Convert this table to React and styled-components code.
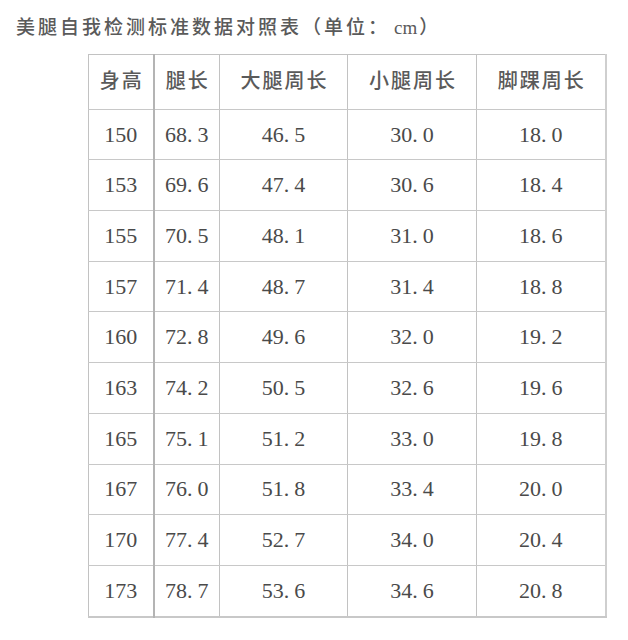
import React from "react";
import styled, { createGlobalStyle } from "styled-components";

const Global = createGlobalStyle`
  html, body { margin: 0; padding: 0; background: #fff; }
  body { font-family: "Liberation Serif", "Noto Sans CJK SC", serif; }
`;

const Page = styled.div`
  width: 628px;
  height: 640px;
  background: #fff;
  padding: 16px 0 0 16px;
  box-sizing: border-box;
`;

const Title = styled.h1`
  margin: 0;
  font-family: "Liberation Serif", "Noto Sans CJK SC", serif;
  font-weight: 500;
  font-size: 19px;
  line-height: 24px;
  letter-spacing: 3px;
  color: #5a5a5a;
  white-space: nowrap;
`;

const Unit = styled.span`
  letter-spacing: 0;
  margin: 0 2px 0 4px;
`;

const Table = styled.table`
  margin: 14px 0 0 72px;
  border-collapse: collapse;
  width: 517px;
  table-layout: fixed;
  border-top: 1px solid #c2c2c2;
  border-left: 1px solid #c2c2c2;
  border-bottom: 2px solid #c8c8c8;
  border-right: 2px solid #cfcfcf;
`;

const Cell = styled.td`
  height: 49.7px;
  padding: 0;
  text-align: center;
  vertical-align: middle;
  border-bottom: 1px solid #c8c8c8;
  border-right: ${(p) => (p.$thick ? "2px solid #b4b4b4" : "1px solid #c2c2c2")};
  color: #4a4a4a;
  font-family: "Liberation Serif", "Noto Sans CJK SC", serif;
  font-size: 22px;
  line-height: 22px;
`;

const HeadCell = styled(Cell).attrs({ as: "th" })`
  font-family: "Noto Sans CJK SC", sans-serif;
  font-weight: 500;
  font-size: 20px;
  letter-spacing: 2px;
  padding: 0 0 4px 2px;
  color: #5a5a5a;
`;

const Dot = styled.span`
  margin-right: 5px;
`;

const Num = ({ v }) => {
  const [a, b] = v.split(".");
  if (b === undefined) return <>{a}</>;
  return (
    <>
      {a}
      <Dot>.</Dot>
      {b}
    </>
  );
};

const widths = [65, 66, 128, 129, 129];
const headers = ["身高", "腿长", "大腿周长", "小腿周长", "脚踝周长"];
const rows = [
  ["150", "68.3", "46.5", "30.0", "18.0"],
  ["153", "69.6", "47.4", "30.6", "18.4"],
  ["155", "70.5", "48.1", "31.0", "18.6"],
  ["157", "71.4", "48.7", "31.4", "18.8"],
  ["160", "72.8", "49.6", "32.0", "19.2"],
  ["163", "74.2", "50.5", "32.6", "19.6"],
  ["165", "75.1", "51.2", "33.0", "19.8"],
  ["167", "76.0", "51.8", "33.4", "20.0"],
  ["170", "77.4", "52.7", "34.0", "20.4"],
  ["173", "78.7", "53.6", "34.6", "20.8"],
];

export default function App() {
  return (
    <>
      <Global />
      <Page>
        <Title>
          美腿自我检测标准数据对照表（单位：<Unit>cm</Unit>）
        </Title>
        <Table>
          <colgroup>
            {widths.map((w, i) => (
              <col key={i} style={{ width: w }} />
            ))}
          </colgroup>
          <thead>
            <tr>
              {headers.map((h, i) => (
                <HeadCell key={h} $thick={i === 0}>
                  {h}
                </HeadCell>
              ))}
            </tr>
          </thead>
          <tbody>
            {rows.map((r) => (
              <tr key={r[0]}>
                {r.map((v, i) => (
                  <Cell key={i} $thick={i === 0}>
                    <Num v={v} />
                  </Cell>
                ))}
              </tr>
            ))}
          </tbody>
        </Table>
      </Page>
    </>
  );
}
